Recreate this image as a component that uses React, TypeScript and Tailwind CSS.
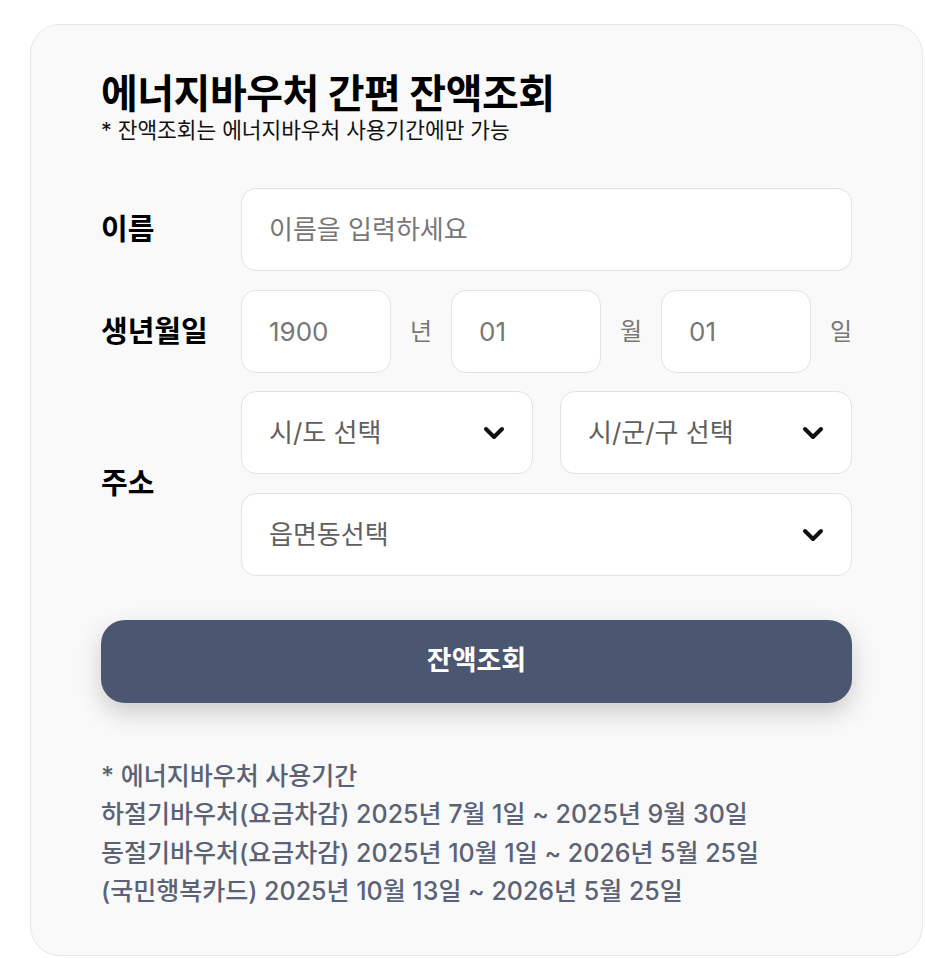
import { useState } from 'react'

const FONT = "font-['Inter','Noto_Sans_CJK_KR',sans-serif]"

function Chevron() {
  return (
    <svg width="22" height="14" viewBox="0 0 22 14" fill="none" className="shrink-0">
      <polyline points="3,3 11,11 19,3" stroke="#111" strokeWidth="4" strokeLinecap="round" strokeLinejoin="round" />
    </svg>
  )
}

function SelectBox({ label }: { label: string }) {
  return (
    <button
      type="button"
      className="flex h-[83px] w-full items-center justify-between rounded-[15px] border border-[#e2e2e2] bg-white pl-[27px] pr-[27px] text-left text-[26px] text-[#5f5f5f]"
    >
      <span>{label}</span>
      <Chevron />
    </button>
  )
}

export default function App() {
  const [name, setName] = useState('')
  const [year, setYear] = useState('')
  const [month, setMonth] = useState('')
  const [day, setDay] = useState('')

  const inputClass =
    'h-[83px] w-full min-w-0 rounded-[15px] border border-[#e2e2e2] bg-white px-[27px] text-[26px] text-[#222] placeholder:text-[#777] focus:outline-none'

  return (
    <div className={`min-h-screen bg-white pt-[24px] pl-[30px] ${FONT}`}>
      <div className="w-[893px] rounded-[30px] border border-[#e6e6e6] bg-[#f9f9f9] px-[70px] pt-[45px] pb-[45px]">
        <h1 className="text-[40px] font-bold leading-[48px] tracking-[-0.5px] text-black">에너지바우처 간편 잔액조회</h1>
        <p className="text-[21.4px] leading-[24px] text-[#111]">* 잔액조회는 에너지바우처 사용기간에만 가능</p>

        <div className="mt-[46px] flex flex-col">
          <div className="grid grid-cols-[140px_1fr] items-center">
            <label className="text-[29px] font-bold text-black">이름</label>
            <input
              value={name}
              onChange={(e) => setName(e.target.value)}
              placeholder="이름을 입력하세요"
              className={inputClass}
            />
          </div>

          <div className="mt-[19px] grid grid-cols-[140px_1fr] items-center">
            <label className="text-[29px] font-bold text-black">생년월일</label>
            <div className="grid grid-cols-[1fr_auto_1fr_auto_1fr_auto] items-center gap-x-[19px]">
              <input value={year} onChange={(e) => setYear(e.target.value)} placeholder="1900" className={inputClass} />
              <span className="text-[24px] text-[#777]">년</span>
              <input value={month} onChange={(e) => setMonth(e.target.value)} placeholder="01" className={inputClass} />
              <span className="text-[24px] text-[#777]">월</span>
              <input value={day} onChange={(e) => setDay(e.target.value)} placeholder="01" className={inputClass} />
              <span className="text-[24px] text-[#777]">일</span>
            </div>
          </div>

          <div className="mt-[18px] grid grid-cols-[140px_1fr] items-center">
            <label className="text-[29px] font-bold text-black">주소</label>
            <div className="flex flex-col gap-[19px]">
              <div className="grid grid-cols-2 gap-x-[27px]">
                <SelectBox label="시/도 선택" />
                <SelectBox label="시/군/구 선택" />
              </div>
              <SelectBox label="읍면동선택" />
            </div>
          </div>
        </div>

        <button
          type="button"
          className="mt-[44px] flex h-[83px] w-full items-center justify-center rounded-[24px] bg-[#4b5670] text-[27px] font-bold text-white shadow-[0_10px_24px_rgba(0,0,0,0.18)]"
        >
          잔액조회
        </button>

        <div className="mt-[54px] text-[25px] font-medium leading-[38.3px] text-[#5b6276]">
          <p>* 에너지바우처 사용기간</p>
          <p>하절기바우처(요금차감) 2025년 7월 1일 ~ 2025년 9월 30일</p>
          <p>동절기바우처(요금차감) 2025년 10월 1일 ~ 2026년 5월 25일</p>
          <p>(국민행복카드) 2025년 10월 13일 ~ 2026년 5월 25일</p>
        </div>
      </div>
    </div>
  )
}
